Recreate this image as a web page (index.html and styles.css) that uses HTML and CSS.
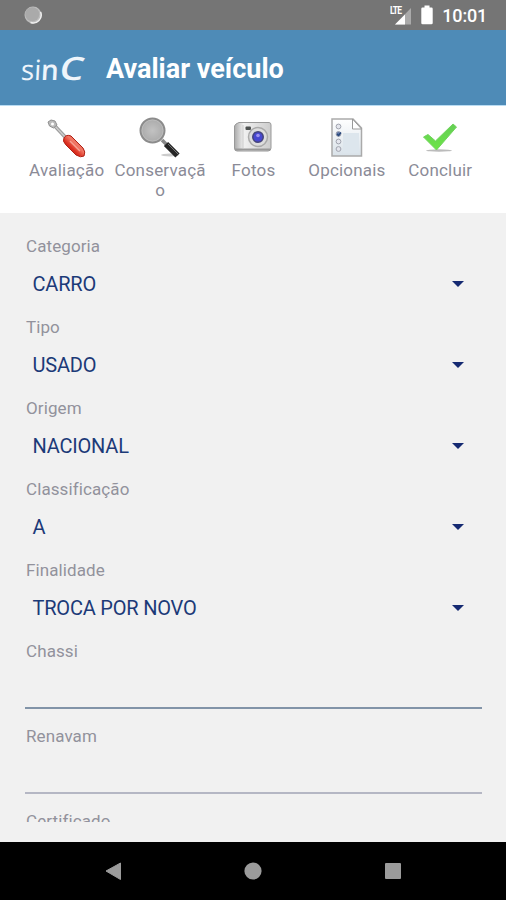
FILE: index.html
```html
<!DOCTYPE html>
<html lang="pt-BR">
<head>
<meta charset="utf-8">
<title>Avaliar veículo</title>
<link rel="stylesheet" href="styles.css">
</head>
<body>
<div class="screen">
  <div class="status">
    <svg class="sync" width="20" height="20" viewBox="0 0 20 20"><circle cx="10" cy="10" r="8.500" fill="#bdbdbd"/><path d="M17.600 7A8 8 0 0 1 7.500 17.500" fill="none" stroke="#eee" stroke-width="1.500"/><circle cx="9.300" cy="9.200" r="7" fill="#aaa"/></svg>
    <div class="signal"><span class="lte">LTE</span><svg width="18" height="18" viewBox="0 0 18 18"><path d="M1 17.500L17 1V17.500Z" fill="#aaa"/><path d="M1 17.500L11 7.500V17.500Z" fill="#fff"/></svg></div>
    <svg class="battery" width="12" height="20" viewBox="0 0 12 20"><path d="M3.500 0.500h5v2h2a1.200 1.200 0 0 1 1.200 1.200V18a1.300 1.300 0 0 1-1.300 1.300H1.600A1.300 1.300 0 0 1 .3 18V3.700a1.200 1.200 0 0 1 1.200-1.200h2z" fill="#fff"/></svg>
    <span class="time">10:01</span>
  </div>
  <header class="bar">
    <div class="logo"><span class="si">si</span><span class="n">n</span><span class="cap">C</span></div>
    <h1>Avaliar veículo</h1>
  </header>
  <nav class="tabs">
    <div class="tab">
      <svg width="44" height="44" viewBox="0 0 44 44">
        <defs><linearGradient id="red" x1="0" y1="1" x2="1" y2="0"><stop offset="0" stop-color="#8f160b"/><stop offset=".4" stop-color="#dc2f20"/><stop offset=".6" stop-color="#f27b69"/><stop offset="1" stop-color="#ac1609"/></linearGradient></defs>
        <path d="M8 8L22 23" stroke="#999" stroke-width="3.600"/><path d="M8 8L22 23" stroke="#ccc" stroke-width="1.600"/>
        <path d="M3 6L6 4L10 5L12 9L8.500 12L4.500 10Z" fill="#bbb" stroke="#909090"/><circle cx="7.500" cy="8" r="1.500" fill="#fff"/>
        <path d="M19 22Q21 18 26 20L38 32Q41 36 39 40Q36 42 31 39L21 29Q17 25 19 22Z" fill="url(#red)" stroke="#b02015"/><path d="M25 25L35 35" stroke="#f7a193" stroke-width="1.500"/>
      </svg>
      <span>Avaliação</span>
    </div>
    <div class="tab">
      <svg width="44" height="44" viewBox="0 0 44 44">
        <defs><radialGradient id="lens"><stop offset="0" stop-color="#c2c2c2"/><stop offset="1" stop-color="#aaa"/></radialGradient></defs>
        <ellipse cx="32" cy="39" rx="9" ry="1.500" fill="#ccc"/>
        <path d="M24 24L29 29" stroke="#888" stroke-width="3.500"/><path d="M28 28L39.500 39.500" stroke="#252525" stroke-width="6"/><path d="M30 28L40 38" stroke="#777" stroke-width="1"/>
        <circle cx="14.500" cy="14.500" r="12" fill="url(#lens)" stroke="#8c8c8c" stroke-width="2"/><circle cx="14.500" cy="14.500" r="10.500" fill="none" stroke="#bbb"/>
      </svg>
      <span>Conservaçã<wbr>o</span>
    </div>
    <div class="tab">
      <svg width="44" height="44" viewBox="0 0 44 44">
        <defs><linearGradient id="cam"><stop offset="0" stop-color="#aaa"/><stop offset=".25" stop-color="#f1f1f1"/><stop offset="1" stop-color="#ccc"/></linearGradient></defs>
        <path d="M5 8L8 6.500H38Q40 6.500 40 9V32Q40 35 37 35H6Q3.500 35 3.500 32V10Z" fill="url(#cam)" stroke="#999"/><path d="M4 33.500H39" stroke="#999" stroke-width="2"/>
        <path d="M12 9V32" stroke="#ccc"/><rect x="14.500" y="10.500" width="5.500" height="3.500" rx="1" fill="#4d5150"/><circle cx="27" cy="21" r="9.500" fill="#ddd" stroke="#aaa" stroke-width="1.500"/>
        <circle cx="27" cy="21" r="6" fill="#45457a"/><circle cx="27" cy="21" r="4.500" fill="#4747d0"/><circle cx="27" cy="19.500" r="1.800" fill="#9c92ef"/>
      </svg>
      <span>Fotos</span>
    </div>
    <div class="tab">
      <svg width="44" height="44" viewBox="0 0 44 44">
        <defs><linearGradient id="page" x2="0" y2="1"><stop offset="0" stop-color="#fff"/><stop offset="1" stop-color="#d9e2e9"/></linearGradient></defs>
        <path d="M7 3H28L36.500 12V40H7Z" fill="url(#page)" stroke="#aaa" stroke-width="1.500"/><path d="M27.500 3V13H36.500Z" fill="#fff" stroke="#999"/>
        <path d="M18 17H34V37H18Z" fill="#dde6ed"/>
        <g fill="#e4e6ed" stroke="#a0a3ae"><circle cx="13.500" cy="10.500" r="2.400"/><circle cx="13.500" cy="18" r="2.400" fill="#6078aa"/><circle cx="13.500" cy="25.500" r="2.400"/><circle cx="13.500" cy="33" r="2.400"/></g><path d="M12 18L13.500 19.500L16 16.500" fill="none" stroke="#27477b" stroke-width="1.500"/>
      </svg>
      <span>Opcionais</span>
    </div>
    <div class="tab">
      <svg width="44" height="44" viewBox="0 0 44 44">
        <defs><linearGradient id="green" x2="0" y2="1"><stop offset="0" stop-color="#65ce56"/><stop offset="1" stop-color="#6ce546"/></linearGradient></defs>
        <ellipse cx="21" cy="34.500" rx="13" ry="1.200" fill="#bbb"/>
        <path d="M5.500 21L10 18.500L17.500 25L35 8L38.500 11L18.500 34Z" fill="url(#green)" stroke="#71d45d"/>
      </svg>
      <span>Concluir</span>
    </div>
  </nav>
  <main class="form">
    <div class="field"><label>Categoria</label><div class="select"><span>CARRO</span><i></i></div></div>
    <div class="field"><label>Tipo</label><div class="select"><span>USADO</span><i></i></div></div>
    <div class="field"><label>Origem</label><div class="select"><span>NACIONAL</span><i></i></div></div>
    <div class="field"><label>Classificação</label><div class="select"><span>A</span><i></i></div></div>
    <div class="field"><label>Finalidade</label><div class="select"><span>TROCA POR NOVO</span><i></i></div></div>
    <div class="field"><label>Chassi</label><div class="input focused"></div></div>
    <div class="field"><label>Renavam</label><div class="input"></div></div>
    <div class="field"><label>Certificado</label></div>
  </main>
  <footer class="keys">
    <svg width="18" height="20" viewBox="0 0 18 20"><path d="M2 10L16.500 2V18.500Z" fill="#9b9b9b" stroke="#9b9b9b" stroke-linejoin="round"/></svg>
    <svg width="18" height="20" viewBox="0 0 18 20"><circle cx="9" cy="10" r="8.600" fill="#9b9b9b"/></svg>
    <svg width="18" height="20" viewBox="0 0 18 20"><rect x="1" y="2" width="16" height="16" rx="1" fill="#9b9b9b"/></svg>
  </footer>
</div>
</body>
</html>
```
FILE: styles.css
```css
* { box-sizing: border-box; }
body { margin: 0; font-family: Roboto, sans-serif; background: #f1f1f1; }
svg { display: block; flex: none; }
.screen { width: 506px; height: 900px; display: flex; flex-direction: column; overflow: hidden; }
.status { height: 30px; flex: none; background: #757575; display: flex; align-items: center; padding: 0 19px 0 23px; color: #fff; }
.signal { position: relative; margin-left: auto; width: 22px; height: 20px; display: flex; justify-content: flex-end; align-items: flex-end; margin-right: 9px; }
.lte { position: absolute; left: 0; top: 0; font-size: 10px; line-height: 11px; font-weight: 700; letter-spacing: -1px; transform: scaleX(.85); transform-origin: left; }
.battery { margin-right: 9px; }
.time { font-size: 18px; font-weight: 500; letter-spacing: -.2px; padding-top: 1px; }
.bar { height: 76px; flex: none; background: #4e8bb7; border-bottom: 1px solid #b9dcf3; display: flex; align-items: center; padding: 3px 0 0 21px; color: #fff; }
.logo { width: 85px; display: flex; align-items: baseline; line-height: 34px; margin-top: -2px; font-family: "Open Sans", sans-serif; color: #eef5fb; }
.si { font-size: 28px; font-weight: 500; transform: skewX(-3deg); }
.n { font-size: 28px; font-weight: 600; transform: skewX(-3deg); }
.cap { font-size: 32px; font-weight: 600; transform: skewX(-10deg) scaleX(1.2); transform-origin: 0 70%; }
h1 { margin: 0; font-size: 27px; line-height: 32px; font-weight: 700; letter-spacing: 0; white-space: nowrap; }
.tabs { height: 107px; flex: none; background: #fff; padding: 10px 19px 0 20px; display: grid; grid-template-columns: repeat(5, 1fr); }
.tab { display: flex; flex-direction: column; align-items: center; text-align: center; color: #8b8b97; font-size: 17px; line-height: 20px; letter-spacing: .2px; }
.tab span { width: 93px; }
.form { height: 609px; flex: none; padding: 23px 24px 0 25px; overflow: hidden; display: flex; flex-direction: column; gap: 5px; }
.field { flex: none; }
label { display: block; height: 20px; line-height: 20px; padding-left: 1px; font-size: 17px; letter-spacing: .1px; color: #92929c; }
.select { height: 56px; display: flex; align-items: center; justify-content: space-between; padding: 0 18px 0 7.5px; color: #1c3a78; font-size: 20px; letter-spacing: -.2px; }
.select i { width: 12px; height: 6px; background: #152a72; clip-path: polygon(0 0, 100% 0, 50% 100%); }
.input { height: 48px; margin-bottom: 12px; border-bottom: 2px solid #b5b7c4; }
.input.focused { border-color: #8294a8; }
.keys { height: 58px; margin-top: auto; flex: none; background: #000; display: flex; align-items: center; justify-content: space-between; padding: 0 104px; }
```
